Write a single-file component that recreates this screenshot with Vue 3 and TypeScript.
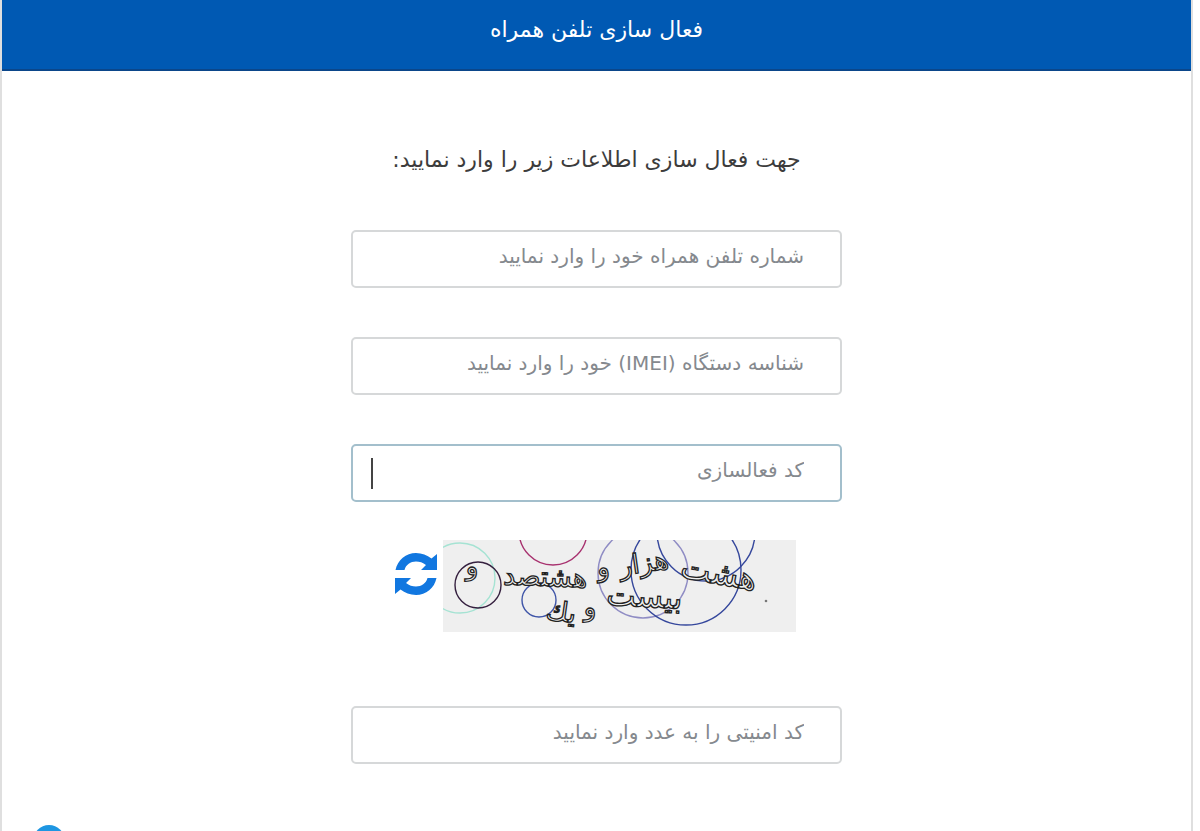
<script setup lang="ts">
import { ref } from 'vue'

interface Circle { cx: number; cy: number; r: number; color: string }
interface Word { text: string; x: number; y: number; angle: number; size: number }

const phone = ref('')
const imei = ref('')
const activation = ref('')
const security = ref('')

const circles: Circle[] = [
  { cx: 17, cy: 38, r: 35, color: '#a5e3d3' },
  { cx: 35, cy: 45, r: 23, color: '#35203f' },
  { cx: 110, cy: -9, r: 34, color: '#a8326f' },
  { cx: 96, cy: 60, r: 17, color: '#3f55a8' },
  { cx: 200, cy: 33, r: 45, color: '#8f8cc4' },
  { cx: 243, cy: 30, r: 55, color: '#35479c' },
  { cx: 263, cy: -8, r: 49, color: '#35479c' },
]

const words: Word[] = [
  { text: 'هشت', x: 274, y: 44, angle: 10, size: 32 },
  { text: 'هزار', x: 202, y: 32, angle: -8, size: 27 },
  { text: 'و', x: 161, y: 36, angle: -6, size: 26 },
  { text: 'هشتصد', x: 102, y: 46, angle: 2, size: 27 },
  { text: 'و', x: 29, y: 35, angle: 0, size: 26 },
  { text: 'بیست', x: 201, y: 67, angle: 3, size: 31 },
  { text: 'و', x: 147, y: 76, angle: 0, size: 26 },
  { text: 'يك', x: 117, y: 81, angle: 8, size: 27 },
]
</script>

<template>
  <div class="page" dir="rtl" lang="fa">
    <main class="card">
      <header class="card-header"><h1>فعال سازی تلفن همراه</h1></header>
      <form class="form" @submit.prevent>
        <p class="intro">جهت فعال سازی اطلاعات زیر را وارد نمایید:</p>
        <input v-model="phone" class="field" type="text" placeholder="شماره تلفن همراه خود را وارد نمایید" aria-label="شماره تلفن همراه خود را وارد نمایید">
        <input v-model="imei" class="field" type="text" placeholder="شناسه دستگاه (IMEI) خود را وارد نمایید" aria-label="شناسه دستگاه (IMEI) خود را وارد نمایید">
        <div class="active-field">
          <input v-model="activation" class="field active" type="text" placeholder="کد فعالسازی" aria-label="کد فعالسازی">
          <span class="caret" aria-hidden="true"></span>
        </div>
        <div class="captcha">
          <svg class="captcha-image" viewBox="0 0 353 92" direction="rtl">
            <rect width="353" height="92" fill="#efefef" />
            <circle v-for="(c, i) in circles" :key="'c' + i" :cx="c.cx" :cy="c.cy" :r="c.r" :stroke="c.color" fill="none" stroke-width="1.4" />
            <text
              v-for="(w, i) in words"
              :key="'w' + i"
              class="captcha-word"
              :x="w.x"
              :y="w.y"
              :font-size="w.size"
              :transform="`rotate(${w.angle} ${w.x} ${w.y})`"
            >{{ w.text }}</text>
            <circle cx="323" cy="61" r="1.3" fill="#777" />
          </svg>
          <button class="refresh" type="button" aria-label="refresh">
            <svg viewBox="0 0 44 44" fill="#1177e0">
              <path d="M1.500 18C3.500 8 12 1 22 1C28 1 33 3.300 37.500 6.500L43 2V18H27L32 13C29 10.500 25.500 9.500 22 9.500C16.500 9.500 12 12.500 10.500 18Z" />
              <path d="M42.500 26C40.500 36 32 43 22 43C16 43 11 40.700 6.500 37.500L1 42V26H17L12 31C15 33.500 18.500 34.500 22 34.500C27.500 34.500 32 31.500 33.500 26Z" />
            </svg>
          </button>
        </div>
        <input v-model="security" class="field" type="text" placeholder="کد امنیتی را به عدد وارد نمایید" aria-label="کد امنیتی را به عدد وارد نمایید">
      </form>
    </main>
    <span class="floating" aria-hidden="true"></span>
  </div>
</template>

<style>
body { margin: 0; background: #fff; }
</style>

<style scoped>
.page {
  height: 100vh;
  overflow: hidden;
  padding-right: 7px;
  box-sizing: border-box;
  font-family: "DejaVu Sans", sans-serif;
}
.card {
  min-height: 100vh;
  box-sizing: border-box;
  border: solid #dfdfdf;
  border-width: 0 2px;
}
.card-header {
  height: 71px;
  box-sizing: border-box;
  padding-top: 12px;
  background: #0059b3;
  border-bottom: 2px solid #0b468a;
  color: #fff;
  text-align: center;
}
h1 { margin: 0; font-size: 22px; line-height: 36px; font-weight: 400; }
.form {
  width: 100%;
  max-width: 491px;
  margin: 0 auto;
  padding-top: 71px;
  display: flex;
  flex-direction: column;
}
.intro {
  margin: 0 0 52px;
  font-size: 22px;
  line-height: 36px;
  color: #3c3c3c;
  text-align: center;
  white-space: nowrap;
}
.field {
  width: 100%;
  height: 58px;
  box-sizing: border-box;
  margin: 0 0 49px;
  padding: 0 36px 6px 20px;
  border: 2px solid #d6d8d9;
  border-radius: 5px;
  background: #fff;
  color: #333;
  font-family: inherit;
  font-size: 20px;
  line-height: 40px;
  outline: none;
}
.field::placeholder { color: #85898e; opacity: 1; line-height: 40px; }
.active-field { position: relative; display: flex; }
.active { border-color: #a3bfcc; margin-bottom: 38px; }
.caret {
  position: absolute;
  left: 20px;
  top: 14px;
  width: 2px;
  height: 31px;
  background: #444;
}
.captcha {
  display: flex;
  align-items: flex-start;
  gap: 5px;
  padding-right: 46px;
  margin-bottom: 74px;
}
.captcha-image { width: 353px; height: 92px; flex: none; }
.captcha-word {
  fill: #efefef;
  stroke: #222;
  stroke-width: 1.3;
  text-anchor: middle;
  font-family: "DejaVu Sans", sans-serif;
}
.refresh {
  width: 44px;
  height: 44px;
  margin-top: 12px;
  padding: 0;
  border: 0;
  background: none;
  cursor: pointer;
}
.refresh svg { display: block; width: 44px; height: 44px; }
.floating {
  position: fixed;
  left: 33px;
  bottom: -26px;
  width: 32px;
  height: 32px;
  border-radius: 50%;
  background: #1e96e2;
}
</style>
